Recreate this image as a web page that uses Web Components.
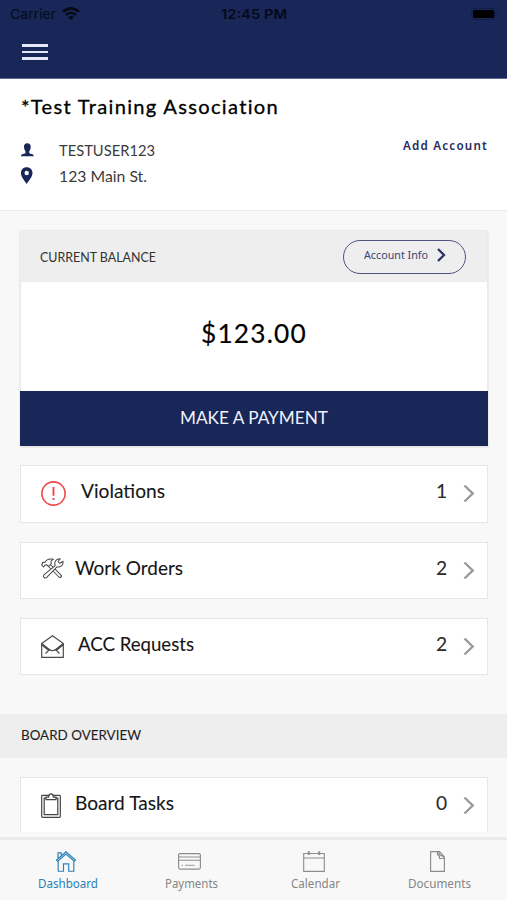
<!DOCTYPE html>
<html lang="en"><head><meta charset="utf-8"><title>Dashboard</title>
<style>
html,body{margin:0;height:100%;overflow:hidden}
body{background:#f8f8f8;font-family:Lato,"Noto Sans",sans-serif;color:#111}
</style></head><body>
<hoa-app></hoa-app>
<script>
const define=(name,html,init)=>customElements.define(name,class extends HTMLElement{
 constructor(){super();this.attachShadow({mode:'open'}).innerHTML=html}
 connectedCallback(){if(init)init(this,this.shadowRoot)}
});

/* A single line of text, condensed or widened to the width in its "w" attribute. */
define('fit-text',`<style>:host{display:block;flex:none;height:24px;line-height:24px;white-space:nowrap}
span{display:inline-block;transform-origin:0 50%}</style><span><slot></slot></span>`,(el,r)=>{
 const w=+el.getAttribute('w'),s=r.querySelector('span');
 el.style.width=w+'px';
 const n=s.getBoundingClientRect().width;
 if(n)s.style.transform='scaleX('+(w/n)+')';
});

define('app-header',`<style>
:host{display:block;box-sizing:border-box;height:79px;background:#182757;border-bottom:1px solid #5e6c93;color:#050a18}
.s{display:grid;grid-template-columns:1fr auto 1fr;align-items:center;height:27px;padding:0 10px;font:13px Inter,sans-serif}
.l{display:flex;align-items:center;gap:6px}.t{font-weight:600}
.b{justify-self:end;display:block}
.m{display:flex;flex-direction:column;gap:4px;width:26px;margin:17px 0 0 22px}
.m i{height:2.5px;background:#e3e7f8}
</style>
<div class="s"><div class="l"><fit-text w="46">Carrier</fit-text>
<svg width="18" height="14" viewBox="0 0 18 14" fill="none" stroke="#050a18" stroke-width="2.5"><path d="M1.2 4.8Q9-2 16.8 4.8M4 8Q9 3.6 14 8"/><path d="M9 13.2 6.1 10.2Q9 7.8 11.9 10.2Z" fill="#050a18" stroke="none"/></svg></div>
<fit-text class="t" w="66">12:45 PM</fit-text>
<svg class="b" width="26" height="12" viewBox="0 0 26 12"><rect x=".6" y=".5" width="23.4" height="11" rx="3" fill="none" stroke="#121d45"/><rect x="2" y="2" width="21" height="8" rx="1.5" fill="#000"/><path d="M25 4v4" stroke="#121d45"/></svg></div>
<div class="m"><i></i><i></i><i></i></div>`);

define('user-profile',`<style>
:host{display:block;box-sizing:border-box;height:132px;background:#fff;border-bottom:1px solid #e9e9e9;padding:15px 20px 0 21px}
.n{font-size:20px;color:#000;letter-spacing:1.3px;-webkit-text-stroke:.3px #000}
.g{display:flex;justify-content:space-between;margin-top:19px}
.r{display:flex;align-items:center;height:26px;font-size:15.4px;color:#3b3b3b}
.r svg{width:13px;margin-right:25px;flex:none}
.a{font:600 12.4px "Noto Sans",sans-serif;line-height:24px;color:#252b5c;letter-spacing:1.3px;margin:-3px -1px 0 0}
</style>
<fit-text class="n" w="258">*Test Training Association</fit-text>
<div class="g"><div>
<div class="r"><svg height="14" viewBox="0 0 13 14" fill="#182757"><path d="M6.3.3C8.8.3 10 2 9.700 4.200 9.500 6.200 8.700 7.600 8.200 8.300V10C8.500 11 12.600 10.600 12.700 12.700V13.200H0V12.700C.1 10.600 4.200 11 4.500 10V8.300C4 7.600 3.200 6.200 3 4.200 2.700 2 3.900.3 6.300.3Z"/></svg><fit-text w="96">TESTUSER123</fit-text></div>
<div class="r"><svg height="18" viewBox="0 0 13 18" fill="#182757" fill-rule="evenodd"><path d="M5.700.3C9.200.3 11.500 2.700 11.500 6.100 11.500 10 7.500 14 5.700 17.100 4 14-.1 10-.1 6.100-.1 2.700 2.200.3 5.700.3ZM5.700 3.800A2.200 2.200 0 1 0 5.700 8.200 2.200 2.200 0 1 0 5.700 3.800Z"/></svg><fit-text w="88">123 Main St.</fit-text></div></div>
<fit-text class="a" w="85">Add Account</fit-text></div>`);

define('balance-card',`<style>
:host{display:block;margin:19px 19px 0 20px;box-sizing:border-box;height:216px;background:#fff;border:1px solid #ebebeb;border-bottom:0;box-shadow:0 1px 2px #0002}
.h{display:flex;align-items:center;justify-content:space-between;height:51px;background:#eee;padding:0 21px 0 19px;font-size:14.200px;color:#333}
.p{display:flex;align-items:center;box-sizing:border-box;width:123px;height:34px;border:1.5px solid #505580;border-radius:17px;padding:0 0 3px 19.5px;font:11.3px "Noto Sans",sans-serif;color:#3c426f}
.p fit-text{margin-right:9px}
.v{display:flex;align-items:center;justify-content:center;height:109px;font-size:26.7px;color:#000}
.v fit-text{margin-top:-8px;letter-spacing:1.2px;-webkit-text-stroke:.15px #000}
.b{display:flex;align-items:center;justify-content:center;height:55px;margin:0 -1px;background:#182757;color:#eef3ff;font-size:17.8px}
.b fit-text{margin-top:-3px}
</style>
<div class="h"><fit-text w="116">CURRENT BALANCE</fit-text><div class="p"><fit-text w="64">Account Info</fit-text><svg width="9" height="14" viewBox="0 0 9 14" fill="none" stroke="#2b3365" stroke-width="2.300"><path d="M1 1 7 7 1 13"/></svg></div></div>
<div class="v"><fit-text w="106">$123.00</fit-text></div>
<div class="b"><fit-text w="148">MAKE A PAYMENT</fit-text></div>`);

/* List row: an icon, a label and a count. */
define('summary-row',`<style>
:host{display:flex;align-items:flex-start;box-sizing:border-box;height:58px;margin:0 19px 0 20px;background:#fff;border:1px solid #e6e6e6;padding:0 12px 0 20px;font-size:19.200px;color:#161616}
.i{flex:none;width:var(--iw);height:55px;display:flex;align-items:center}
.l,.c{margin-top:calc(13px + var(--dy,0px));-webkit-text-stroke:.1px}
.c{margin-left:auto;color:#2b2b2b;width:10px;line-height:24px;margin-right:17px}
.k{margin-top:18px;flex:none}
</style><div class="i"><slot name="icon"></slot></div><div class="l"><slot></slot></div><div class="c"><slot name="count"></slot></div>
<svg class="k" width="12" height="19" viewBox="0 0 12 19" fill="none" stroke="#999" stroke-width="2.400"><path d="M1.500 1.500 9.700 9.500 1.500 17.500"/></svg>`);

define('section-title',`<style>:host{display:flex;align-items:center;box-sizing:border-box;height:44px;background:#eee;padding:0 20px 2px 21px;font-size:14.200px;color:#1f1f1f;-webkit-text-stroke:.1px}</style><slot></slot>`);

define('tab-item',`<style>:host{display:flex;flex-direction:column;align-items:center;color:#858585;font:12.200px "Noto Sans",sans-serif}
.i{height:22px;margin:-1px 0 0;display:flex;align-items:center}</style><div class="i"><slot name="icon"></slot></div><slot></slot>`);

define('tab-bar',`<style>:host{display:grid;grid-template-columns:repeat(4,124px);justify-content:center;box-sizing:border-box;height:63px;background:#f8f8f8;border-top:3px solid #ebebeb;padding:11px 0 0}
.on{color:#2a7fb5}svg{display:block;transform:translateX(-2px)}</style>
<tab-item class="on"><svg slot="icon" width="20" height="21" viewBox="0 0 20 21" fill="none" stroke="#2a7fb5" stroke-width="1.150"><path d="M.6 9 10 .8 19.400 9 18.300 10.300 10 3 1.700 10.300ZM2 8V1.800H5.200V5M2.200 10V20.200H7.500V12.800H12.700V20.200H17.800V10"/></svg><fit-text w="60">Dashboard</fit-text></tab-item>
<tab-item><svg slot="icon" width="23" height="17" viewBox="0 0 23 17" fill="none" stroke="#8d8d8d" stroke-width="1.150"><rect x=".6" y=".6" width="21.800" height="15.500" rx="1.500"/><path d="M.6 4H22.400M.6 7.200H22.400"/><path d="M3.500 12.300H5M7 12.300H16.500" stroke-width=".9"/></svg><fit-text w="53">Payments</fit-text></tab-item>
<tab-item><svg slot="icon" width="22" height="21" viewBox="0 0 22 21" fill="none" stroke="#8d8d8d" stroke-width="1.100"><path d="M.7 2.500H21.300V20.400H.7ZM.7 7H21.300"/><path d="M5.800.3V4M16.200.3V4" stroke-width="2"/></svg><fit-text w="49">Calendar</fit-text></tab-item>
<tab-item><svg slot="icon" width="15" height="21" viewBox="0 0 15 21" fill="none" stroke="#8d8d8d" stroke-width="1.150"><path d="M.6.6H9.500L14.400 6V20.400H.6ZM7.500 1V3.500L9.500 5.500V7.500H14.400M9 .8V3.300L14 6"/></svg><fit-text w="63">Documents</fit-text></tab-item>`);

define('hoa-app',`<style>
:host{display:flex;flex-direction:column;width:507px;height:900px;overflow:hidden}
main{height:837px;flex:none;overflow:hidden;display:flex;flex-direction:column;background:#f8f8f8}
main>*{flex:none}
.w{height:832px;overflow:hidden}
summary-row svg{display:block;flex:none}
.r1{margin-top:19px;--iw:40px;--dy:-.5px}
.r2{margin-top:19px;height:57px;--iw:34px}
.r3{margin-top:19px;height:57px;--iw:37px;--dy:-.5px}
section-title{margin-top:39px}
.r4{margin-top:19px;--iw:33.500px;height:60px;--dy:-.5px}
</style>
<main><div class="w">
<app-header></app-header><user-profile></user-profile><balance-card></balance-card>
<summary-row class="r1"><svg slot="icon" width="25" height="25" viewBox="0 0 25 25" fill="none" stroke="#ef4747"><circle cx="12.500" cy="12.500" r="11.600" stroke-width="1.600"/><path d="M12.500 6V14.800M12.500 17V19" stroke-width="1.900"/></svg><fit-text w="84">Violations</fit-text><span slot="count">1</span></summary-row>
<summary-row class="r2"><svg slot="icon" width="23" height="21" viewBox="0 0 23 21" fill="#fff" stroke="#4a4a4a" stroke-width="1.050" stroke-linejoin="round" style="margin-bottom:5px"><path d="M9.500 6.500 20.500 17.600Q20.400 19.600 18.400 19.500L7.500 8.500Z"/><path d="M14.200 7.700Q13 4.300 15.200 2.200 17 .4 19.200 1L17 3.500 18.800 5.300 21.900 3.200Q22.500 6 20.500 7.800 18.400 9.500 16 8.800L6 19.200Q4.200 20.700 3 19.300 1.700 18 3.200 16.700Z"/><path d="M.7 7 1.800 4.300 3.800 4.500Q5.800.2 12.500 1.200 8.900 2.500 10.400 5.500L7.500 8.500 5.500 6.700 3.700 7.200 2.500 9Z"/></svg><fit-text w="108">Work Orders</fit-text><span slot="count">2</span></summary-row>
<summary-row class="r3"><svg slot="icon" width="23" height="23" viewBox="0 0 23 23" fill="none" stroke="#4a4a4a" stroke-width="1.200"><path d="M.7 8.500 11.500.8 22.300 8.500V22.300H.7Z"/><path d="M.7 8.500 8.300 14.500Q11.500 17 14.700 14.500L22.300 8.500M.7 9.800 7.500 15.200M22.300 9.800 15.500 15.200M8.500 14.500 4.500 18.500M14.500 14.500 18.500 18.500"/></svg><fit-text w="116">ACC Requests</fit-text><span slot="count">2</span></summary-row>
<section-title><fit-text w="120">BOARD OVERVIEW</fit-text></section-title>
<summary-row class="r4"><svg slot="icon" width="20" height="25" viewBox="0 0 20 25" fill="none" stroke="#444" stroke-width="1.200"><rect x=".7" y="2.300" width="18.600" height="22" rx=".8"/><path d="M5.500 5.200H3.200V21.700H16.800V5.200H14.500"/><path d="M5 6.700V4.200H7.600Q7.700.8 10 .8T12.400 4.200H15V6.700Z" fill="#fff"/></svg><fit-text w="99">Board Tasks</fit-text><span slot="count">0</span></summary-row>
</div></main><tab-bar></tab-bar>`);
</script></body></html>
